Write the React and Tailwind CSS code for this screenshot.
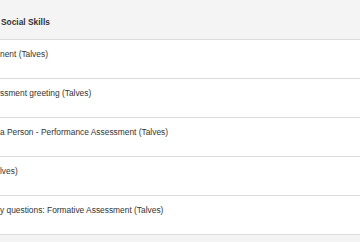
const rows = [
  'nent (Talves)',
  'ssment greeting (Talves)',
  'a Person - Performance Assessment (Talves)',
  'lves)',
  'y questions: Formative Assessment (Talves)',
];

export default function App() {
  return (
    <div className="w-[360px] h-[242px] overflow-hidden bg-[#f4f4f4] text-[#333] font-['Liberation_Sans',Arial,sans-serif] text-[8.4px] leading-[10px]">
      <div className="h-[39px] pt-[17px] pl-px font-bold whitespace-nowrap">Social Skills</div>
      <div className="border-b border-[#dcdcdc]">
        {rows.map((label) => (
          <div key={label} className="h-[39px] border-t border-[#dcdcdc] bg-white pt-[9px] whitespace-nowrap">
            {label}
          </div>
        ))}
      </div>
    </div>
  );
}
